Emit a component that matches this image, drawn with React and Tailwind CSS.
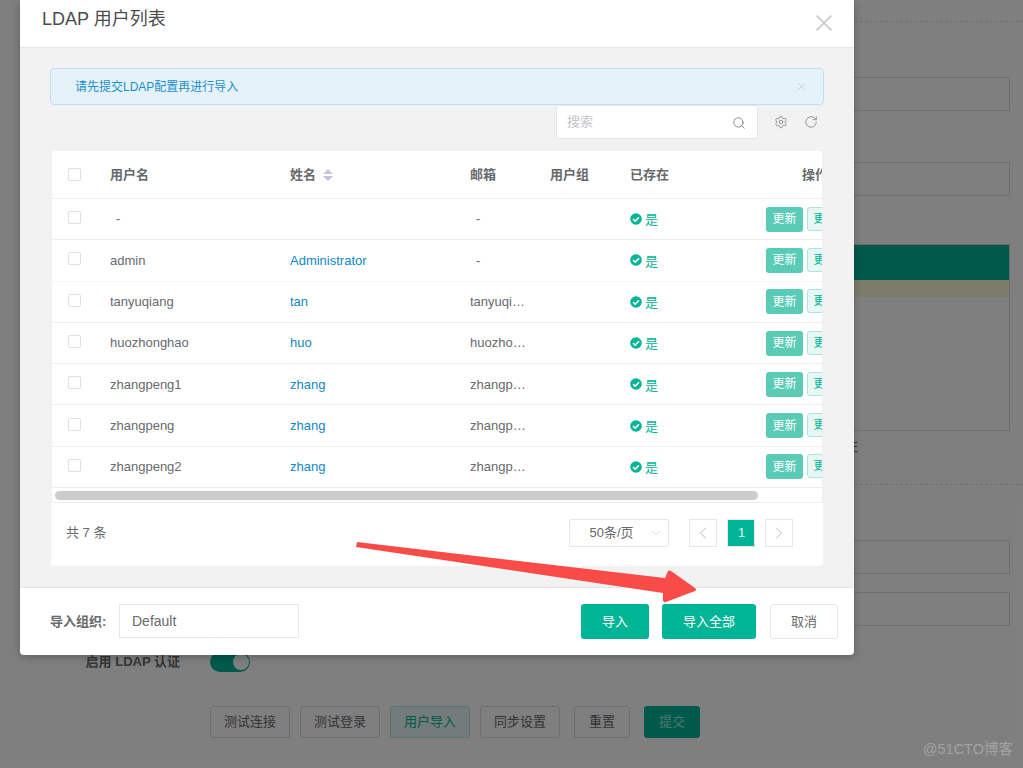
import React from "react";
import { Settings, RotateCw, Search, X, ChevronLeft, ChevronRight, ChevronDown } from "lucide-react";

const FONT = "[font-family:'Liberation_Sans','Noto_Sans_CJK_SC',sans-serif]";

const rows = [
  { u: "-", uPad: true, n: "", e: "-", ePad: true },
  { u: "admin", n: "Administrator", e: "-", ePad: true },
  { u: "tanyuqiang", n: "tan", e: "tanyuqi…" },
  { u: "huozhonghao", n: "huo", e: "huozho…" },
  { u: "zhangpeng1", n: "zhang", e: "zhangp…" },
  { u: "zhangpeng", n: "zhang", e: "zhangp…" },
  { u: "zhangpeng2", n: "zhang", e: "zhangp…" },
];

function Box() {
  return <span className="block h-[13px] w-[13px] rounded-[2px] border border-[#dfe1e6] bg-white" />;
}

function CheckIcon() {
  return (
    <svg width="12" height="12" viewBox="0 0 12 12" className="shrink-0">
      <circle cx="6" cy="6" r="5.8" fill="#00b496" />
      <path d="M3 6.2 L5.2 8.2 L9 4.2" fill="none" stroke="#fff" strokeWidth="1.6" />
    </svg>
  );
}

function BgButton({ children, className }) {
  return (
    <div className={"flex h-8 items-center justify-center rounded-[3px] border text-[13px] " + className}>{children}</div>
  );
}

function Background() {
  return (
    <div className="h-[768px] w-full overflow-hidden bg-white text-[#676a6c]">
      <div className="ml-[60px] mt-[21px] border-t border-dashed border-[#dcdcdc]" />
      <div className="pl-[210px] pr-[13px]">
        <div className="mt-[55px] h-[34px] border border-[#dcdcdc]" />
        <div className="mt-[51px] h-[34px] border border-[#dcdcdc]" />
        <div className="mt-[48px] h-[187px] border border-[#dcdcdc]">
          <div className="h-[35px] bg-[#00b496]" />
          <div className="h-[17px] bg-[#fbf8d6]" />
        </div>
        <div className="ml-[635px] mt-[5px] h-5 text-[13px] leading-5">注</div>
      </div>
      <div className="ml-[60px] mt-[28px] border-t border-dashed border-[#dcdcdc]" />
      <div className="pl-[210px] pr-[13px]">
        <div className="mt-[55px] h-[34px] border border-[#dcdcdc]" />
        <div className="mt-[18px] h-[34px] border border-[#dcdcdc]" />
        <div className="mt-[26px] flex h-[20px] items-center">
          <div className="-ml-[125px] w-[95px] text-right text-[13px] font-bold">启用 LDAP 认证</div>
          <div className="ml-[30px] flex h-[20px] w-10 items-center justify-end rounded-full bg-[#00b496] pr-[1px]">
            <div className="h-4 w-4 rounded-full bg-white" />
          </div>
        </div>
        <div className="mt-[34px] flex">
          <BgButton className="w-20 border-[#dcdcdc]">测试连接</BgButton>
          <BgButton className="ml-[10px] w-20 border-[#dcdcdc]">测试登录</BgButton>
          <BgButton className="ml-[10px] w-20 border-[#b2e8dd] bg-[#e6f8f5] text-[#00b496]">用户导入</BgButton>
          <BgButton className="ml-[10px] w-20 border-[#dcdcdc]">同步设置</BgButton>
          <BgButton className="ml-[14px] w-14 border-[#dcdcdc]">重置</BgButton>
          <BgButton className="ml-[14px] w-14 border-[#00b496] bg-[#00b496] text-[#a0e8d8]">提交</BgButton>
        </div>
      </div>
    </div>
  );
}

function Row({ r, faint }) {
  return (
    <div className={"grid h-[41.3px] grid-cols-[58px_180px_180px_80px_80px_136px_100px] items-center border-b text-[13px] " + (faint ? "border-[#f5f6f8]" : "border-[#eceef2]")}>
      <div className="-mt-[3px] pl-4"><Box /></div>
      <div className={r.uPad ? "pl-[6px]" : ""}>{r.u}</div>
      <div className="text-[#0f87c7]">{r.n}</div>
      <div className={r.ePad ? "pl-[6px]" : ""}>{r.e}</div>
      <div />
      <div className="flex items-center gap-[3px] text-[#00b496]">
        <CheckIcon />
        <span className="mt-[2px]">是</span>
      </div>
      <div className="flex gap-1 text-[12px]">
        <span className="flex h-[25px] w-[37px] shrink-0 items-center justify-center rounded-[3px] bg-[#5accb6] text-white">更新</span>
        <span className="flex h-[24px] w-[37px] shrink-0 items-center justify-center rounded-[3px] border border-[#ade5da] bg-[#e6f7f4] text-[#00b496]">更新</span>
      </div>
    </div>
  );
}

function Modal() {
  return (
    <div className="absolute left-5 top-0 flex h-[655px] w-[834px] flex-col rounded-b-[4px] bg-white shadow-[0_2px_8px_rgba(0,0,0,0.25)]">
      <div className="relative h-12 shrink-0 border-b border-[#e4e6ea] pl-[22px] pt-[6px]">
        <h2 className="text-[18px] leading-[26px] font-normal text-[#4a4c4e]">LDAP 用户列表</h2>
        <X className="absolute right-[16px] top-[9px] text-[#c6c6c6]" size={28} strokeWidth={1.4} />
      </div>
      <div className="flex-1 bg-[#f2f2f3] pl-[30px] pr-[30px] pt-5">
        <div className="flex h-[37px] items-center justify-between rounded-[4px] border border-[#bcdff2] bg-[#e6f2f9] pl-[24px] pr-[16px] text-[12px] text-[#1a8fcc]">
          <span>请先提交LDAP配置再进行导入</span>
          <X size={11} strokeWidth={1.5} className="text-[#b9bec4]" />
        </div>
        <div className="flex h-[34px] items-center justify-end">
          <div className="flex h-[34px] w-[202px] items-center justify-between rounded-[2px] border border-[#e4e6ea] bg-white pl-[10px] pr-[11px] text-[13px] text-[#c4c6ca]">
            <span className="-mt-px">搜索</span>
            <Search size={14} strokeWidth={1.3} className="mt-[1px] text-[#676a6c]" />
          </div>
          <div className="ml-4 flex w-[50px] items-center justify-between pr-[6px] text-[#77797c]">
            <Settings size={14} strokeWidth={1.3} />
            <RotateCw size={14} strokeWidth={1.3} />
          </div>
        </div>
        <div className="ml-px mt-3 h-[415px] w-[772px] overflow-hidden rounded-b-[4px] bg-white text-[#676a6c]">
          <div className="h-[352px] overflow-hidden border-x border-[#eef0f5]">
            <div className="grid h-12 grid-cols-[58px_180px_180px_80px_80px_172px_64px] items-center border-b border-[#eceef2] text-[13px] font-bold">
              <div className="-mt-[1px] pl-4"><Box /></div>
              <div>用户名</div>
              <div className="flex items-center gap-[7px]">
                姓名
                <svg width="10" height="12" viewBox="0 0 10 12">
                  <path d="M5 0 L10 5 L0 5 Z M5 12 L10 7 L0 7 Z" fill="#c3c9d4" />
                </svg>
              </div>
              <div>邮箱</div>
              <div>用户组</div>
              <div>已存在</div>
              <div className="whitespace-nowrap">操作</div>
            </div>
            {rows.map((r, i) => (
              <Row key={i} r={r} faint={i === 1} />
            ))}
            <div className="flex h-[15px] items-center border-b border-[#eceef2] pl-[3px]">
              <div className="h-[9px] w-[703px] rounded-full bg-[#cccccc]" />
            </div>
          </div>
          <div className="flex h-[63px] items-center pb-1 pl-[15px] text-[13px]">
            <span>共 7 条</span>
            <div className="ml-[463px] flex h-7 w-[100px] items-center justify-between rounded-[2px] border border-[#e4e6ea] pl-[19px] pr-[5px]">
              <span>50条/页</span>
              <ChevronDown size={14} strokeWidth={1} className="text-[#b8bbc0]" />
            </div>
            <div className="ml-5 flex h-7 w-7 items-center justify-center border border-[#e4e6ea] text-[#a8abb0]"><ChevronLeft size={20} strokeWidth={1} /></div>
            <div className="ml-[10px] flex h-7 w-7 items-center justify-center rounded-[1px] border border-[#e4e6ea] bg-[#00b496] text-[12px] text-white">1</div>
            <div className="ml-[10px] flex h-7 w-7 items-center justify-center border border-[#e4e6ea] text-[#a8abb0]"><ChevronRight size={20} strokeWidth={1} /></div>
          </div>
        </div>
      </div>
      <div className="flex h-[68px] shrink-0 items-center border-t border-[#e4e6ea] pl-[30px] pr-4 text-[13px] text-[#676a6c]">
        <span className="mt-px w-[69px] font-bold">导入组织:</span>
        <div className="-mt-px flex h-[34px] w-[180px] items-center border border-[#e4e6ea] pl-3 text-[14px]">Default</div>
        <div className="ml-auto flex h-[35px] w-[68px] items-center justify-center rounded-[3px] bg-[#00b496] text-white">导入</div>
        <div className="ml-[13px] flex h-[35px] w-[94px] items-center justify-center rounded-[3px] bg-[#00b496] text-white">导入全部</div>
        <div className="ml-[14px] flex h-[35px] w-[68px] items-center justify-center rounded-[3px] border border-[#e4e6ea]">取消</div>
      </div>
    </div>
  );
}

export default function App() {
  return (
    <div className={"relative h-[768px] w-[1023px] overflow-hidden " + FONT}>
      <Background />
      <div className="absolute inset-0 bg-black/50" />
      <Modal />
      <svg className="absolute left-0 top-0" width="1023" height="768" viewBox="0 0 1023 768">
        <path
          d="M357 542 L665 578 L668 571 Q669 570 671 571 L695 588 Q697 590 695 591 L666 602 Q663 603 663 600 L663 593 L356 547 Z"
          fill="#f94c48"
        />
      </svg>
      <div className="absolute bottom-[7px] right-[10px] text-[14.5px] text-[#a3a3a3]">@51CTO博客</div>
    </div>
  );
}
